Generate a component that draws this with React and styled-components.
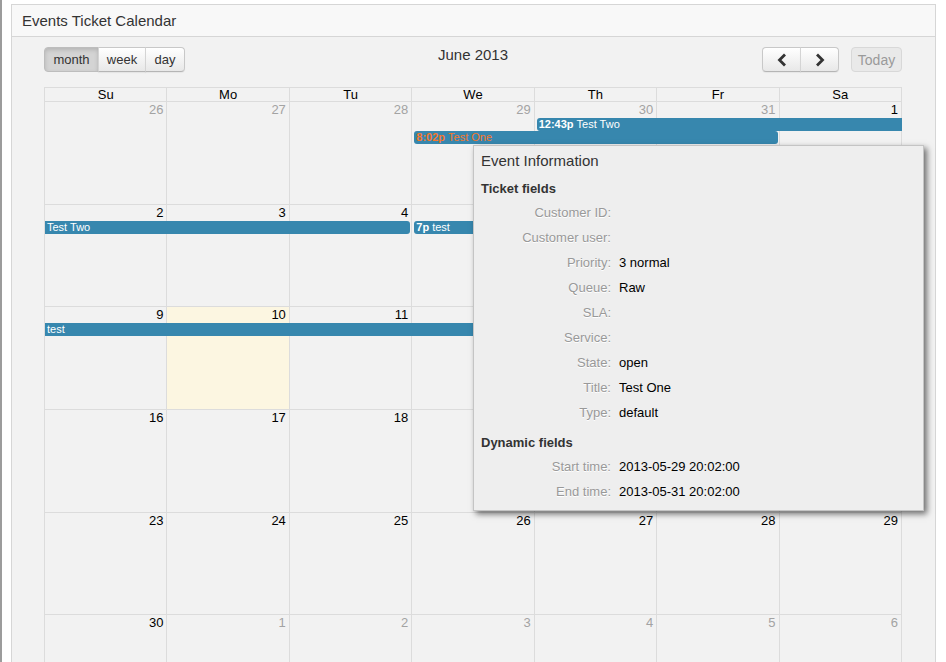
import React from "react";
import styled, { createGlobalStyle, css } from "styled-components";

const GlobalStyle = createGlobalStyle`
  html, body { margin: 0; padding: 0; background: #ffffff; }
  body { font-family: "Liberation Sans", Arial, Helvetica, sans-serif; color: #333; overflow: hidden; }
  * { box-sizing: border-box; }
`;

const Frame = styled.div`
  border-left: 2px solid #9c9c9c;
  min-height: 100vh;
  padding: 4px 0 0 9px;
`;

const Panel = styled.section`
  width: 925px;
  border: 1px solid #d6d6d6;
  background: #f2f2f2;
  min-height: 700px;
`;

const PanelHeader = styled.header`
  height: 32px;
  display: flex;
  align-items: center;
  padding: 0 10px;
  background: #f8f8f8;
  border-bottom: 1px solid #d6d6d6;
  font-size: 15px;
  color: #333;
`;

const PanelBody = styled.div`
  padding: 10px 33px 0 32px;
`;

const Calendar = styled.div`
  position: relative;
`;

const Toolbar = styled.div`
  display: grid;
  grid-template-columns: 1fr auto 1fr;
  height: 25px;
  margin-bottom: 15px;
`;

const ButtonGroup = styled.div`
  display: flex;
`;

const Btn = styled.button`
  height: 25px;
  width: ${(p) => p.$w}px;
  padding: 0;
  margin: 0;
  font-family: inherit;
  font-size: 13px;
  color: #333;
  display: flex;
  align-items: center;
  justify-content: center;
  border: 1px solid #c8c8c8;
  border-bottom-color: #b5b5b5;
  background: linear-gradient(#ffffff, #e8e8e8);
  box-shadow: inset 0 1px 0 rgba(255, 255, 255, 0.6), 0 1px 1px rgba(0, 0, 0, 0.05);
  & + & { border-left-color: #d4d4d4; margin-left: -1px; }
  &:first-child { border-radius: 4px 0 0 4px; }
  &:last-child { border-radius: 0 4px 4px 0; }
  &:only-child { border-radius: 4px; }
  ${(p) =>
    p.$active &&
    css`
      background: #d4d4d4;
      box-shadow: inset 0 2px 4px rgba(0, 0, 0, 0.15);
      border-color: #bdbdbd;
    `}
  ${(p) =>
    p.$disabled &&
    css`
      background: #e9e9e9;
      color: #9a9a9a;
      border-color: #d8d8d8;
      box-shadow: none;
      font-size: 14px;
    `}
`;

const RightTools = styled.div`
  justify-self: end;
  display: flex;
  gap: 12px;
`;

const Title = styled.h2`
  margin: 0;
  font-weight: normal;
  font-size: 15px;
  line-height: 16px;
  color: #333;
`;

const Grid = styled.div`
  border-left: 1px solid #dcdcdc;
  border-top: 1px solid #dcdcdc;
`;

const HeadRow = styled.div`
  display: grid;
  grid-template-columns: repeat(7, 1fr);
`;

const HeadCell = styled.div`
  height: 14px;
  line-height: 13px;
  font-size: 13px;
  color: #000;
  text-align: center;
  border-right: 1px solid #dcdcdc;
  border-bottom: 1px solid #dcdcdc;
`;

const WeekRow = styled.div`
  display: grid;
  grid-template-columns: repeat(7, 1fr);
  grid-template-rows: 15px 14px 14px 1fr;
  height: 102.7px;
`;

const DayCell = styled.div`
  grid-row: 1 / -1;
  grid-column: ${(p) => p.$col};
  border-right: 1px solid #dcdcdc;
  border-bottom: 1px solid #dcdcdc;
  background: ${(p) => (p.$today ? "#fcf6e1" : "transparent")};
`;

const DayNum = styled.div`
  text-align: right;
  padding: 0 3px;
  font-size: 13px;
  line-height: 15px;
  color: ${(p) => (p.$other ? "#a3a3a3" : "#000")};
`;

const Event = styled.div`
  grid-row: ${(p) => p.$slot + 1};
  grid-column: ${(p) => p.$from} / ${(p) => p.$to + 1};
  z-index: 1;
  align-self: start;
  height: 13px;
  margin: ${(p) => (p.$slot === 1 ? "1px" : "0")} ${(p) => (p.$contRight ? "0" : "2px")} 0
    ${(p) => (p.$contLeft ? "0" : "2px")};
  padding: 0 2px;
  background: #3787ae;
  border-radius: ${(p) => (p.$contLeft ? "0" : "3px")} ${(p) => (p.$contRight ? "0" : "3px")}
    ${(p) => (p.$contRight ? "0" : "3px")} ${(p) => (p.$contLeft ? "0" : "3px")};
  color: ${(p) => (p.$hover ? "#f7772a" : "#ffffff")};
  font-size: 11px;
  line-height: 13px;
  white-space: nowrap;
  overflow: hidden;
  b { font-weight: bold; margin-right: 3px; }
`;

const Popup = styled.div`
  position: absolute;
  left: 429px;
  top: 98px;
  width: 451px;
  height: 366px;
  z-index: 5;
  padding: 5px 7px 0;
  background: #eeeeee;
  border: 1px solid #c4c4c4;
  box-shadow: 3px 3px 6px rgba(0, 0, 0, 0.55);
`;

const PopupTitle = styled.h3`
  margin: 0;
  font-weight: normal;
  font-size: 15px;
  line-height: 20px;
  color: #333;
`;

const SectionTitle = styled.h4`
  margin: ${(p) => p.$top}px 0 3px;
  font-size: 13px;
  line-height: 16px;
  font-weight: bold;
  color: #333;
`;

const Fields = styled.dl`
  margin: 0;
  display: grid;
  grid-template-columns: 130px 1fr;
  column-gap: 8px;
  grid-auto-rows: 25px;
  align-items: center;
  font-size: 13px;
`;

const Label = styled.dt`
  text-align: right;
  color: #999;
  text-shadow: 0 1px 0 #fff;
`;

const Value = styled.dd`
  margin: 0;
  color: #000;
`;

const Chevron = ({ dir }) => (
  <svg width="14" height="14" viewBox="0 0 14 14" aria-hidden="true">
    <polyline
      points={dir === "left" ? "9,2.5 4.5,7 9,11.5" : "5,2.5 9.5,7 5,11.5"}
      fill="none"
      stroke="#333"
      strokeWidth="2.8"
      strokeLinecap="square"
      strokeLinejoin="miter"
    />
  </svg>
);

const days = ["Su", "Mo", "Tu", "We", "Th", "Fr", "Sa"];

const weeks = [
  { nums: [26, 27, 28, 29, 30, 31, 1], other: [1, 1, 1, 1, 1, 1, 0] },
  { nums: [2, 3, 4, 5, 6, 7, 8], other: [0, 0, 0, 0, 0, 0, 0] },
  { nums: [9, 10, 11, 12, 13, 14, 15], other: [0, 0, 0, 0, 0, 0, 0], today: 1 },
  { nums: [16, 17, 18, 19, 20, 21, 22], other: [0, 0, 0, 0, 0, 0, 0] },
  { nums: [23, 24, 25, 26, 27, 28, 29], other: [0, 0, 0, 0, 0, 0, 0] },
  { nums: [30, 1, 2, 3, 4, 5, 6], other: [0, 1, 1, 1, 1, 1, 1] },
];

const events = [
  [
    { slot: 1, from: 5, to: 7, time: "12:43p", title: "Test Two", contRight: true },
    { slot: 2, from: 4, to: 6, time: "8:02p", title: "Test One", hover: true },
  ],
  [
    { slot: 1, from: 1, to: 3, title: "Test Two", contLeft: true },
    { slot: 1, from: 4, to: 4, time: "7p", title: "test" },
  ],
  [{ slot: 1, from: 1, to: 5, title: "test", contLeft: true }],
  [],
  [],
  [],
];

const ticketFields = [
  ["Customer ID:", ""],
  ["Customer user:", ""],
  ["Priority:", "3 normal"],
  ["Queue:", "Raw"],
  ["SLA:", ""],
  ["Service:", ""],
  ["State:", "open"],
  ["Title:", "Test One"],
  ["Type:", "default"],
];

const dynamicFields = [
  ["Start time:", "2013-05-29 20:02:00"],
  ["End time:", "2013-05-31 20:02:00"],
];

export default function App() {
  return (
    <>
      <GlobalStyle />
      <Frame>
        <Panel>
          <PanelHeader>Events Ticket Calendar</PanelHeader>
          <PanelBody>
            <Calendar>
              <Toolbar>
                <ButtonGroup>
                  <Btn $active $w={55}>month</Btn>
                  <Btn $w={48}>week</Btn>
                  <Btn $w={40}>day</Btn>
                </ButtonGroup>
                <Title>June 2013</Title>
                <RightTools>
                  <ButtonGroup>
                    <Btn $w={39} aria-label="previous">
                      <Chevron dir="left" />
                    </Btn>
                    <Btn $w={39} aria-label="next">
                      <Chevron dir="right" />
                    </Btn>
                  </ButtonGroup>
                  <ButtonGroup>
                    <Btn $disabled $w={51}>Today</Btn>
                  </ButtonGroup>
                </RightTools>
              </Toolbar>
              <Grid>
                <HeadRow>
                  {days.map((d) => (
                    <HeadCell key={d}>{d}</HeadCell>
                  ))}
                </HeadRow>
                {weeks.map((w, wi) => (
                  <WeekRow key={wi}>
                    {w.nums.map((n, i) => (
                      <DayCell key={i} $col={i + 1} $today={w.today === i}>
                        <DayNum $other={w.other[i] === 1}>{n}</DayNum>
                      </DayCell>
                    ))}
                    {events[wi].map((e, ei) => (
                      <Event
                        key={ei}
                        $slot={e.slot}
                        $from={e.from}
                        $to={e.to}
                        $contLeft={e.contLeft}
                        $contRight={e.contRight}
                        $hover={e.hover}
                      >
                        {e.time && <b>{e.time}</b>}
                        {e.title}
                      </Event>
                    ))}
                  </WeekRow>
                ))}
              </Grid>
              <Popup>
                <PopupTitle>Event Information</PopupTitle>
                <SectionTitle $top={10}>Ticket fields</SectionTitle>
                <Fields>
                  {ticketFields.map(([l, v]) => (
                    <React.Fragment key={l}>
                      <Label>{l}</Label>
                      <Value>{v}</Value>
                    </React.Fragment>
                  ))}
                </Fields>
                <SectionTitle $top={10}>Dynamic fields</SectionTitle>
                <Fields>
                  {dynamicFields.map(([l, v]) => (
                    <React.Fragment key={l}>
                      <Label>{l}</Label>
                      <Value>{v}</Value>
                    </React.Fragment>
                  ))}
                </Fields>
              </Popup>
            </Calendar>
          </PanelBody>
        </Panel>
      </Frame>
    </>
  );
}
